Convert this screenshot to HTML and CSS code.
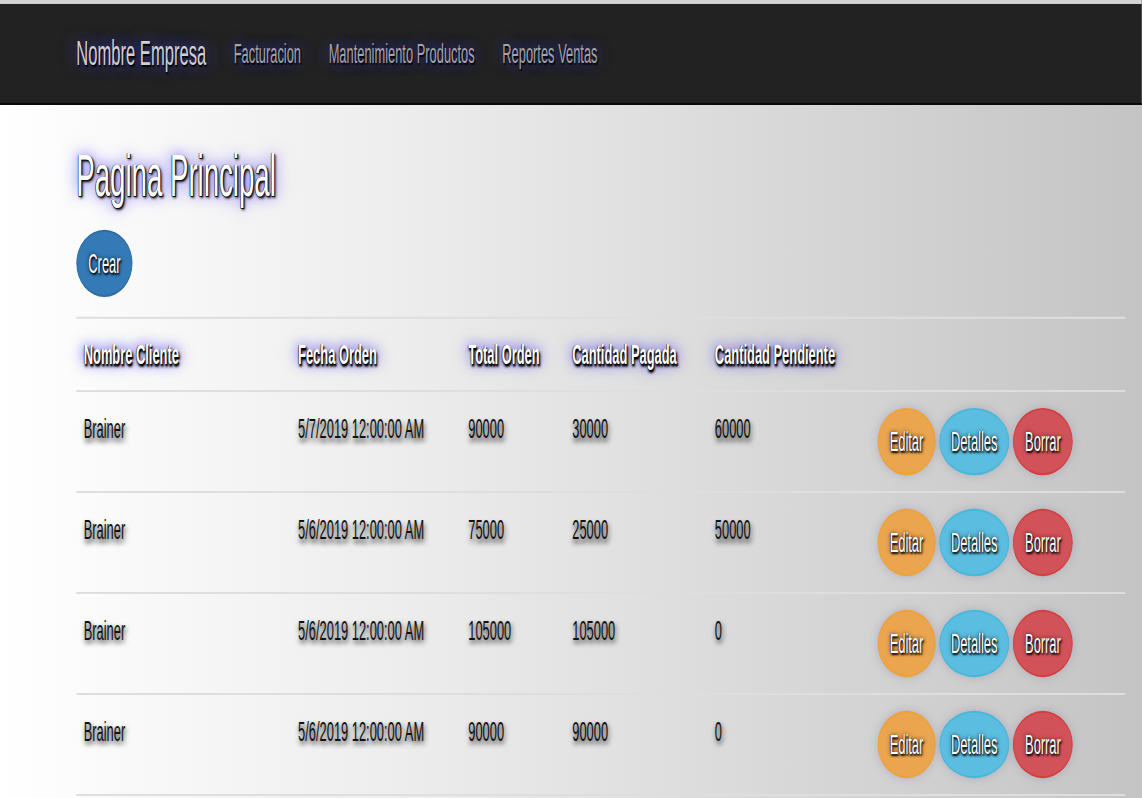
FILE: index.html
```html
<!DOCTYPE html>
<html lang="es">
<head>
<meta charset="utf-8">
<title>Pagina Principal</title>
<link rel="stylesheet" href="styles.css">
</head>
<body>
<div class="viewport">
<div class="page">
  <nav class="navbar">
    <div class="container nav-inner">
      <a class="brand" href="#">Nombre Empresa</a>
      <ul class="nav-links">
        <li><a href="#">Facturacion</a></li>
        <li><a href="#">Mantenimiento Productos</a></li>
        <li><a href="#">Reportes Ventas</a></li>
      </ul>
    </div>
  </nav>
  <main class="container">
    <h2 class="title">Pagina Principal</h2>
    <div class="toolbar">
      <a class="btn btn-primary" href="#">Crear</a>
    </div>
    <table class="table">
      <colgroup>
        <col class="c1"><col class="c2"><col class="c3"><col class="c4"><col class="c5"><col class="c6">
      </colgroup>
      <tr>
        <th>Nombre Cliente</th>
        <th>Fecha Orden</th>
        <th>Total Orden</th>
        <th>Cantidad Pagada</th>
        <th>Cantidad Pendiente</th>
        <th></th>
      </tr>
      <tr>
        <td>Brainer</td><td>5/7/2019 12:00:00 AM</td><td>90000</td><td>30000</td><td>60000</td>
        <td><div class="row-actions"><a class="btn btn-warning" href="#">Editar</a><a class="btn btn-info" href="#">Detalles</a><a class="btn btn-danger" href="#">Borrar</a></div></td>
      </tr>
      <tr>
        <td>Brainer</td><td>5/6/2019 12:00:00 AM</td><td>75000</td><td>25000</td><td>50000</td>
        <td><div class="row-actions"><a class="btn btn-warning" href="#">Editar</a><a class="btn btn-info" href="#">Detalles</a><a class="btn btn-danger" href="#">Borrar</a></div></td>
      </tr>
      <tr>
        <td>Brainer</td><td>5/6/2019 12:00:00 AM</td><td>105000</td><td>105000</td><td>0</td>
        <td><div class="row-actions"><a class="btn btn-warning" href="#">Editar</a><a class="btn btn-info" href="#">Detalles</a><a class="btn btn-danger" href="#">Borrar</a></div></td>
      </tr>
      <tr>
        <td>Brainer</td><td>5/6/2019 12:00:00 AM</td><td>90000</td><td>90000</td><td>0</td>
        <td><div class="row-actions"><a class="btn btn-warning" href="#">Editar</a><a class="btn btn-info" href="#">Detalles</a><a class="btn btn-danger" href="#">Borrar</a></div></td>
      </tr>
    </table>
  </main>
</div>
</div>
</body>
</html>
```

FILE: styles.css
```css
html, body {
  margin: 0;
  padding: 0;
  overflow: hidden;
}

body {
  font-family: "Liberation Sans", Arial, Helvetica, sans-serif;
  font-size: 14px;
  line-height: 20px;
  color: #111;
}

.viewport {
  width: 1142px;
  height: 798px;
  overflow: hidden;
  background: linear-gradient(to right, #ffffff 0%, #ededed 35%, #dadada 65%, #c4c4c4 100%);
}

/* The page is drawn at its natural size and shown stretched, as in the capture */
.page {
  width: 1241px;
  height: 403px;
  transform: scale(0.92, 1.98);
  transform-origin: 0 0;
}

.container {
  width: 1140px;
  margin-left: 83px;
}

/* Navbar */
.navbar {
  border-top: 2px solid #d4d4d4;
  background: #222;
  border-bottom: 1px solid #080808;
  height: 50px;
}

.nav-inner {
  display: flex;
  align-items: center;
  height: 50px;
}

.brand {
  margin-left: -15px;
  padding: 15px;
  font-size: 18px;
  line-height: 20px;
  color: #cfcfd6;
  text-decoration: none;
  text-shadow: 1px 1px 1px #000, 0 0 12px #3a3ad0;
}

.nav-links {
  display: flex;
  margin: 0;
  padding: 0;
  list-style: none;
}

.nav-links a {
  display: block;
  padding: 15px;
  font-size: 14px;
  line-height: 20px;
  color: #a4a4ac;
  text-decoration: none;
  text-shadow: 1px 1px 1px #000, 0 0 10px #3434c0;
}

/* Heading */
.title {
  margin: 19px 0 10px;
  font-size: 30px;
  line-height: 33px;
  font-weight: 500;
  color: #ffffff;
  text-shadow: 1px 0.5px 0 #111, -0.6px 0 0 #222, 0 0.3px 0 #222, 1.5px 1px 2px #000, 0 0 9px #7a6cf0, 0 0 16px #b0a8f8;
}

.toolbar {
  display: flex;
  padding-top: 1px;
  margin-bottom: 10px;
}

/* Buttons */
.btn {
  display: inline-block;
  padding: 6px 12px;
  font-size: 14px;
  line-height: 20px;
  border: 1px solid transparent;
  border-radius: 50%;
  color: #fff;
  text-decoration: none;
  text-align: center;
  white-space: nowrap;
  text-shadow: 1px 1px 1.5px #000, -0.4px 0 0 #222, 0 0 3px rgba(0, 0, 0, 0.7);
}

.btn-primary {
  background: #337ab7;
  border-color: #2e6da4;
}

.btn-warning {
  background: #eba54e;
  border-color: #eea236;
}

.btn-info {
  background: #5bbde0;
  border-color: #46b8da;
}

.btn-danger {
  background: #d2525a;
  border-color: #d43f3a;
}

.row-actions {
  display: flex;
  gap: 4px;
}

.row-actions .btn {
  box-shadow: 0 0 6px rgba(110, 110, 160, 0.35);
}

/* Table */
.table {
  width: 1140px;
  border-collapse: collapse;
  table-layout: fixed;
  border-bottom: 1px solid #dedede;
}

.c1 { width: 233px; }
.c2 { width: 185px; }
.c3 { width: 113px; }
.c4 { width: 155px; }
.c5 { width: 177px; }
.c6 { width: 277px; }

.table th,
.table td {
  padding: 8px;
  line-height: 20px;
  text-align: left;
  vertical-align: top;
  border-top: 1px solid #dedede;
  white-space: nowrap;
}

.table th {
  font-weight: bold;
  color: #ffffff;
  text-shadow: 1px 1px 1px #000, -0.5px 0 0 #222, 1px 1.5px 2px #000, 0 0 8px #5a4ee0, 0 0 14px #a9a2f2;
}

.table td {
  color: #111;
  text-shadow: 1px 2px 4px rgba(0, 0, 0, 0.85);
}
```
